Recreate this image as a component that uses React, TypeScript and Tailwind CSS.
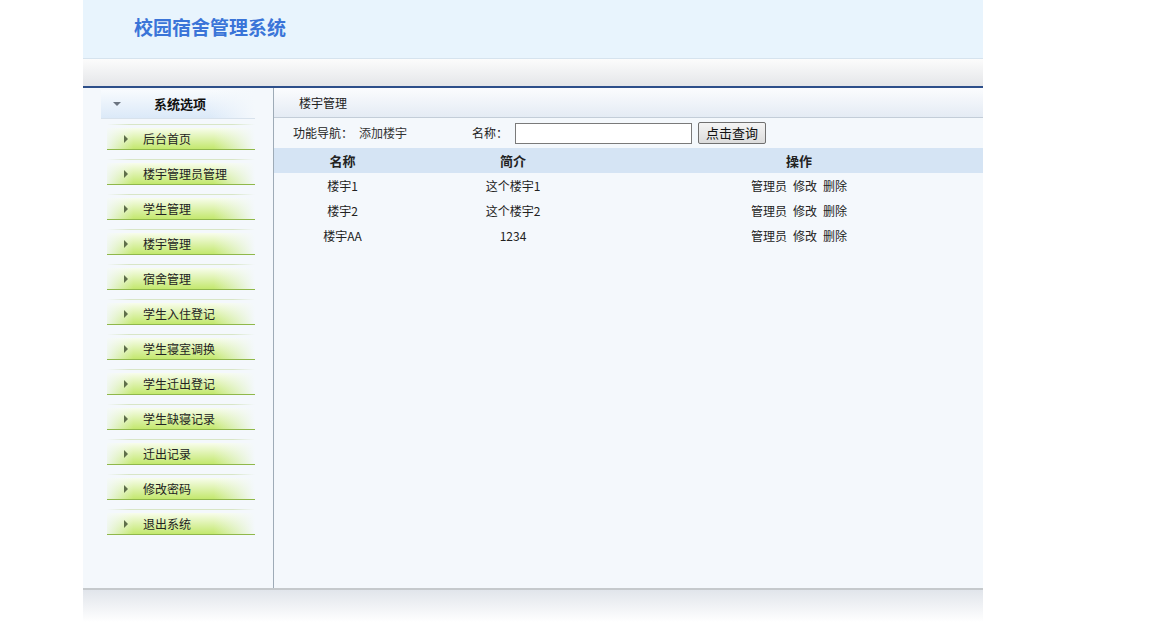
import { useState } from "react";

const menuItems = [
  "后台首页",
  "楼宇管理员管理",
  "学生管理",
  "楼宇管理",
  "宿舍管理",
  "学生入住登记",
  "学生寝室调换",
  "学生迁出登记",
  "学生缺寝记录",
  "迁出记录",
  "修改密码",
  "退出系统",
];

const buildings = [
  { name: "楼宇1", intro: "这个楼宇1" },
  { name: "楼宇2", intro: "这个楼宇2" },
  { name: "楼宇AA", intro: "1234" },
];

const font = "font-['SimSun','Noto_Sans_CJK_SC',sans-serif]";

export default function App() {
  const [keyword, setKeyword] = useState("");

  return (
    <div className={`${font} text-[12px] text-[#222] bg-white min-h-[635px]`}>
      <div className="ml-[83px] w-[900px]">
        {/* Header */}
        <div className="h-[59px] bg-[#e8f4fd] border-b border-[#d6e3ee] pl-[51px] pt-[13px]">
          <h1 className="text-[19px] leading-[28px] font-semibold text-[#3a74d8] font-['Noto_Sans_CJK_SC',serif]">
            校园宿舍管理系统
          </h1>
        </div>

        {/* Gray bar */}
        <div className="h-[29px] bg-[linear-gradient(to_bottom,#fcfcfc,#e4e6e9)] border-b-2 border-[#2d4f8a]" />

        {/* Body */}
        <div className="flex h-[500px] bg-[#f4f8fc]">
          {/* Sidebar */}
          <div className="w-[191px] border-r border-[#9eabb7] pt-[2px]">
            <div className="ml-[18px] w-[154px] h-[29px] flex items-center bg-[linear-gradient(to_right,transparent,transparent_70%,#f4f8fc),linear-gradient(to_bottom,#f8fbfe,#dbe9f8)] border-b border-[#d8e2ec]">
              <span className="ml-[12px] w-0 h-0 border-l-[4px] border-r-[4px] border-t-[4px] border-l-transparent border-r-transparent border-t-[#6b7480]" />
              <span className="ml-[33px] font-bold text-[13px] text-[#111]">系统选项</span>
            </div>
            {menuItems.map((item) => (
              <div key={item} className="h-[35px] pt-[5px] ml-[24px] w-[148px] cursor-pointer">
                <div className="h-px bg-[linear-gradient(to_right,transparent,#d8e6c6_15%,#d8e6c6_85%,transparent)]" />
                <div className="mt-[3px] h-[22px] flex items-center border-b border-[#8fb84a] bg-[linear-gradient(to_right,rgba(244,248,252,0.85),transparent_18%,transparent_72%,#f4f8fc),linear-gradient(to_bottom,#f8fdec,#c3e86e)]">
                  <span className="ml-[17px] w-0 h-0 border-t-[4px] border-b-[4px] border-l-[4px] border-t-transparent border-b-transparent border-l-[#5e6e4a]" />
                  <span className="ml-[15px] mt-px text-[#222]">{item}</span>
                </div>
              </div>
            ))}
          </div>

          {/* Content */}
          <div className="flex-1">
            <div className="h-[30px] flex items-center pl-[25px] pt-[1px] bg-[linear-gradient(to_bottom,#fbfcfe,#e4ebf4)] border-b border-[#c3cdd8]">
              楼宇管理
            </div>
            <div className="h-[30px] flex items-center pl-[19px]">
              <span>功能导航：</span>
              <span className="ml-[6px] text-[#333]">添加楼宇</span>
              <span className="ml-[65px]">名称：</span>
              <input
                value={keyword}
                onChange={(e) => setKeyword(e.target.value)}
                className="ml-[7px] w-[177px] h-[21px] bg-white border border-[#7a7a7a] outline-none px-1"
              />
              <button className="ml-[6px] h-[22px] px-[7px] text-[13px] rounded-[2px] border border-[#707070] bg-[linear-gradient(to_bottom,#f4f4f4,#dcdcdc)] text-[#111]">
                点击查询
              </button>
            </div>
            <table className="w-full border-collapse">
              <thead>
                <tr className="h-[25px] bg-[#d5e4f4]">
                  <th className="w-[137px] font-bold text-[13px] text-center">名称</th>
                  <th className="w-[204px] font-bold text-[13px] text-center">简介</th>
                  <th className="font-bold text-[13px] text-center">操作</th>
                </tr>
              </thead>
              <tbody>
                {buildings.map((b) => (
                  <tr key={b.name} className="h-[25px]">
                    <td className="text-center">{b.name}</td>
                    <td className="text-center">{b.intro}</td>
                    <td className="text-center">
                      <span className="cursor-pointer">管理员</span>
                      <span className="ml-[6px] cursor-pointer">修改</span>
                      <span className="ml-[6px] cursor-pointer">删除</span>
                    </td>
                  </tr>
                ))}
              </tbody>
            </table>
          </div>
        </div>

        {/* Footer */}
        <div className="h-[34px] border-t-2 border-[#c5c9cc] bg-[linear-gradient(to_bottom,#e1e5eb,#ffffff)]" />
      </div>
    </div>
  );
}
